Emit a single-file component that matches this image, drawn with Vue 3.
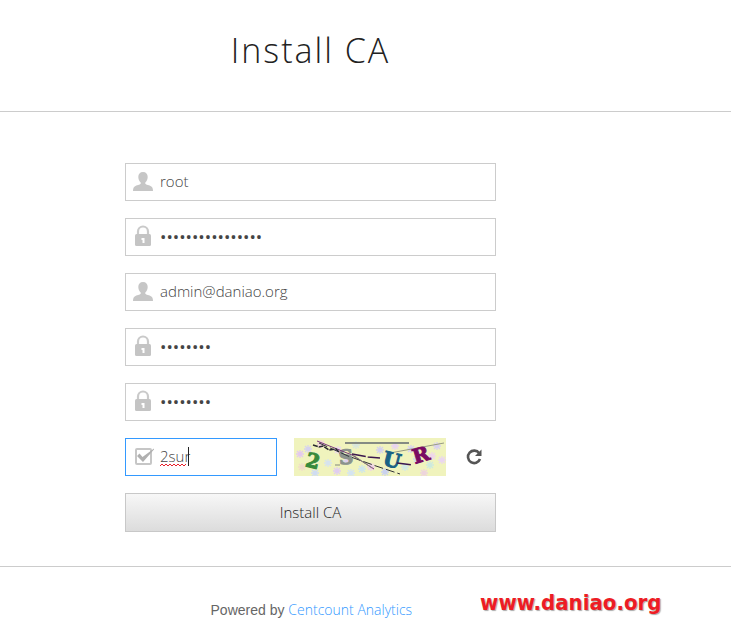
<script setup>
import { ref } from 'vue'

const fields = ref([
  { id: 'db-user', label: 'Database user', type: 'text', icon: 'user', value: 'root' },
  { id: 'db-pass', label: 'Database password', type: 'password', icon: 'lock', value: 'abcdefgh12345678' },
  { id: 'email', label: 'Administrator email', type: 'text', icon: 'user', value: 'admin@daniao.org' },
  { id: 'pass', label: 'Password', type: 'password', icon: 'lock', value: 'abcd1234' },
  { id: 'pass2', label: 'Repeat password', type: 'password', icon: 'lock', value: 'abcd1234' },
])
const code = ref('2sur')

const flakes = [
  [6, 16, '#e3c9ee'], [14, 11, '#d5d2ef'], [27, 6, '#f0d0df'], [34, 25, '#d6e3ef'], [43, 33, '#e0cdf0'],
  [21, 35, '#cfdcf2'], [8, 29, '#f1dcc9'], [53, 23, '#dcd0f0'], [62, 7, '#d8e7dc'], [68, 31, '#cde5ec'],
  [77, 29, '#eed0e9'], [86, 12, '#d3d0ee'], [91, 34, '#c9d1ef'], [101, 8, '#e8d5ef'], [111, 29, '#d2e9e5'],
  [117, 11, '#d6d0f1'], [123, 21, '#cbd8f1'], [136, 27, '#cdeade'], [143, 8, '#d8d1ef'], [148, 22, '#ead6f0'],
  [130, 35, '#edd4dd'], [57, 35, '#d4e4f2'], [44, 12, '#ead6ef'], [138, 18, '#efd6e9'],
]
</script>

<template>
  <div class="page">
    <header class="top"><h1>Install CA</h1></header>

    <main class="body">
      <form class="form" @submit.prevent>
        <div v-for="f in fields" :key="f.id" class="field">
          <label :for="f.id" :aria-label="f.label">
            <svg v-if="f.icon === 'user'" width="22" height="22" viewBox="0 0 22 22" fill="#c6c6c6">
              <path d="M11 2C8 2 6.200 4 6.300 7c.1 2.600 1 4.400 2.400 5.500v1.300c-.6 1-4.200 1.500-6 2.600C1.300 17.300 1 19 1 21h20c0-2-.3-3.700-1.700-4.600-1.800-1.100-5.400-1.600-6-2.600v-1.300c1.400-1.100 2.300-2.900 2.400-5.500C15.800 4 14 2 11 2z" />
            </svg>
            <svg v-else width="22" height="22" viewBox="0 0 22 22">
              <path d="M6 10V6.500a5 5 0 0 1 10 0V10" fill="none" stroke="#cacaca" stroke-width="2.200" />
              <rect x="3" y="9" width="16" height="12" rx="1.500" fill="#c4c4c4" />
              <path d="M9.500 13h3v5h-2v-3h-1z" fill="#fff" />
            </svg>
          </label>
          <input :id="f.id" v-model="f.value" :type="f.type" autocomplete="off" />
        </div>

        <div class="verify">
          <div class="field active">
            <label for="code" aria-label="Verification code">
              <svg width="22" height="22" viewBox="0 0 22 22" fill="none">
                <rect x="4" y="4" width="15" height="15" rx="1" stroke="#c6c6c6" stroke-width="2" />
                <path d="M5 11l2.500-2.500 3 3.500L22 3.500v1L11 17z" fill="#b0b0b0" />
              </svg>
            </label>
            <input id="code" v-model="code" type="text" autocomplete="off" />
            <svg class="spelling" width="28" height="4" viewBox="0 0 28 4" fill="none" stroke="#e8202a">
              <path d="M0 3l2-2 2 2 2-2 2 2 2-2 2 2 2-2 2 2 2-2 2 2 2-2 2 2 2-2" />
            </svg>
            <span class="caret"></span>
          </div>

          <svg class="captcha" viewBox="0 0 152 38" role="img">
            <rect width="152" height="38" fill="#f0f3bd" />
            <g v-for="(s, i) in flakes" :key="i" :stroke="s[2]" stroke-width="1.300">
              <path :d="`M${s[0] - 4} ${s[1]}h8M${s[0]} ${s[1] - 4}v8M${s[0] - 3} ${s[1] - 3}l6 6M${s[0] + 3} ${s[1] - 3}l-6 6`" />
            </g>
            <path d="M51 5h64" stroke="#858b83" stroke-width="2" />
            <path d="M96 15L150 5" stroke="#979b83" />
            <text x="19" y="30" fill="#388a3c" stroke="#388a3c" transform="rotate(14 19 23)">2</text>
            <text x="52" y="26" fill="#8b938c" stroke="#8b938c" transform="rotate(-4 52 19)">S</text>
            <text x="98" y="29" fill="#196285" stroke="#196285" transform="rotate(14 98 22)">U</text>
            <text x="127" y="24" fill="#7a0a62" stroke="#7a0a62" transform="rotate(-17 127 17)">R</text>
            <g fill="none" stroke-width="1">
              <path d="M23 3L58 17 80 31" stroke="#793878" />
              <path d="M19 7l6 2 4-1 6 4 7-1 4 4" stroke="#292930" stroke-width="1.500" stroke-dasharray="5 1" />
              <path d="M25 5l29 13L82 28l24 8" stroke="#303038" stroke-dasharray="9 3" />
              <path d="M58 16l16 3 12 1M103 25l15 2" stroke="#3b164e" stroke-width="1.500" stroke-dasharray="14 2" />
              <path d="M41 27h5M59 17l19 13" stroke="#84877c" />
            </g>
          </svg>

          <button class="refresh" type="button" aria-label="Refresh code">
            <svg width="18" height="18" viewBox="0 0 18 18">
              <path d="M14.200 5.200A6.200 6.200 0 1 0 15 11" fill="none" stroke="#555" stroke-width="2.600" />
              <path d="M16.500 1.500V8H10z" fill="#555" />
            </svg>
          </button>
        </div>

        <button class="submit" type="submit">Install CA</button>
      </form>
    </main>

    <footer class="foot">
      <p>Powered by <a href="#">Centcount Analytics</a></p>
      <strong class="mark">www.daniao.org</strong>
    </footer>
  </div>
</template>

<style>
body {
  background: #fff;
}
</style>

<style scoped>
.page {
  font-family: "Open Sans", "Noto Sans", sans-serif;
  font-weight: 300;
  color: #333;
}
.page * {
  box-sizing: border-box;
}
.top {
  padding: 24px 110px 35px 0;
  border-bottom: 1px solid #ccc;
  text-align: center;
}
h1 {
  margin: 0;
  font-size: 34px;
  line-height: 52px;
  font-weight: 300;
  letter-spacing: 2px;
  color: #222;
}
.body {
  padding: 51px 110px 34px 0;
  border-bottom: 1px solid #ccc;
}
.form {
  display: flex;
  flex-direction: column;
  gap: 17px;
  max-width: 371px;
  margin: 0 auto;
}
.field {
  position: relative;
  display: flex;
  align-items: center;
  height: 38px;
  padding: 0 0 2px 6px;
  border: 1px solid #ccc;
  background: #fff;
}
.field label {
  display: flex;
  flex: none;
}
.field input {
  flex: 1;
  min-width: 0;
  height: 34px;
  padding: 0 6px;
  border: 0;
  outline: 0;
  background: transparent;
  font: inherit;
  font-size: 15px;
  color: #444;
}
.field input[type="password"] {
  font-size: 17px;
  font-weight: 400;
}
.verify {
  display: flex;
  align-items: center;
  gap: 17px;
}
.active {
  width: 152px;
  border-color: #3399ff;
}
.spelling {
  position: absolute;
  left: 34px;
  bottom: 8px;
}
.caret {
  position: absolute;
  left: 62px;
  top: 8px;
  width: 1px;
  height: 19px;
  background: #222;
}
.captcha {
  width: 152px;
  height: 38px;
  font: bold 20px "DejaVu Serif", serif;
  text-anchor: middle;
}
.refresh {
  display: flex;
  padding: 0 0 0 2px;
  border: 0;
  background: none;
}
.submit {
  height: 39px;
  padding: 0 0 2px;
  border: 1px solid #c8c8c8;
  background: linear-gradient(#f7f7f7, #dcdcdc);
  font: inherit;
  font-size: 15px;
  color: #222;
}
.foot {
  display: flex;
  align-items: flex-start;
  justify-content: center;
  gap: 68px;
  padding: 19px 0 20px 141px;
}
.foot p {
  margin: 14px 0 0;
  font: 14px/20px "Liberation Sans", sans-serif;
  color: #666;
}
.foot a {
  font-family: "Open Sans", sans-serif;
  font-weight: 300;
  color: #3399ff;
  text-decoration: none;
}
.mark {
  font: bold 22px/34px "DejaVu Sans Condensed", "DejaVu Sans", sans-serif;
  color: #ed1c24;
  text-shadow: 1px 1px 1px #aaa;
}
</style>
